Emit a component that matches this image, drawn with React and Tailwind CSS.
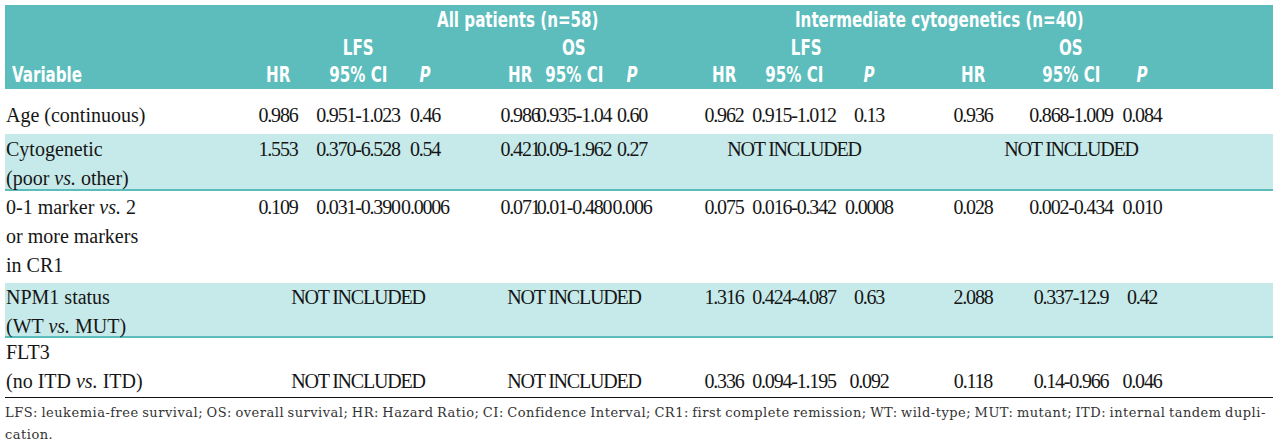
import React from "react";

const COLS = [
  "w-[66px]",
  "w-[94px]",
  "w-[40px]",
  "ml-[55px] w-[40px]",
  "w-[68px]",
  "w-[48px]",
  "ml-[44px] w-[48px]",
  "w-[92px]",
  "w-[58px]",
  "ml-[50px] w-[50px]",
  "ml-[22px] w-[102px]",
  "w-[40px]",
];

const NI = "NOT INCLUDED";
const NI4 = ["", NI, ""];

const ROWS = [
  {
    label: <>Age (continuous)</>,
    vals: ["0.986", "0.951-1.023", "0.46", "0.986", "0.935-1.04", "0.60", "0.962", "0.915-1.012", "0.13", "0.936", "0.868-1.009", "0.084"],
    cls: "h-[45px] pt-[12px]",
  },
  {
    label: (
      <>
        Cytogenetic
        <br />
        (poor <i>vs.</i> other)
      </>
    ),
    vals: ["1.553", "0.370-6.528", "0.54", "0.421", "0.09-1.962", "0.27", ...NI4, ...NI4],
    cls: "h-[57px] pt-[1px] bg-[#c6eaea] border-b-2 border-[#5cbcbc]",
  },
  {
    label: (
      <>
        0-1 marker <i>vs.</i> 2
        <br />
        or more markers
        <br />
        in CR1
      </>
    ),
    vals: ["0.109", "0.031-0.390", "0.0006", "0.071", "0.01-0.480", "0.006", "0.075", "0.016-0.342", "0.0008", "0.028", "0.002-0.434", "0.010"],
    cls: "h-[92px] pt-[2px]",
  },
  {
    label: (
      <>
        NPM1 status
        <br />
        (WT <i>vs.</i> MUT)
      </>
    ),
    vals: [...NI4, ...NI4, "1.316", "0.424-4.087", "0.63", "2.088", "0.337-12.9", "0.42"],
    cls: "h-[55px] bg-[#c6eaea] border-b-2 border-[#5cbcbc]",
  },
  {
    label: (
      <>
        FLT3
        <br />
        (no ITD <i>vs.</i> ITD)
      </>
    ),
    vals: [...NI4, ...NI4, "0.336", "0.094-1.195", "0.092", "0.118", "0.14-0.966", "0.046"],
    cls: "h-[60px] border-b border-[#111]",
    bottom: true,
  },
];

const headFont = {
  fontFamily: '"Liberation Sans Narrow", "DejaVu Sans Condensed", "Roboto Condensed", "Liberation Sans", sans-serif',
};

// condensed header text: the available fonts are too wide, squeeze them
function Sq({ children, left }) {
  return (
    <span className={`inline-block scale-x-[0.8] whitespace-nowrap ${left ? "origin-left" : "origin-center"}`}>
      {children}
    </span>
  );
}

function HeadRow({ cells, className }) {
  return (
    <div className={`flex h-[24px] leading-[24px] ${className}`}>
      <div className="w-[240px] pl-[7px]">{cells[0] && <Sq left>{cells[0]}</Sq>}</div>
      {COLS.map((c, i) => (
        <div key={i} className={`${c} flex justify-center whitespace-nowrap`}>
          {cells[i + 1] && <Sq>{cells[i + 1]}</Sq>}
        </div>
      ))}
    </div>
  );
}

export default function App() {
  return (
    <div className="w-[1280px] h-[446px] bg-white pt-[5px] px-[5px] text-[#161616]">
      <div className="w-[1268px]">
        {/* header */}
        <div className="bg-[#5cbdbc] text-white font-bold text-[21px] h-[84px] pt-[3px]" style={headFont}>
          <div className="flex h-[24px] leading-[24px]">
            <div className="w-[790px] pl-[432px]">
              <Sq left>All patients (n=58)</Sq>
            </div>
            <div>
              <Sq left>Intermediate cytogenetics (n=40)</Sq>
            </div>
          </div>
          <HeadRow
            className="mt-[4px]"
            cells={["", "", "LFS", "", "", "OS", "", "", <span className="pl-[30px]">LFS</span>, "", "", "OS", ""]}
          />
          <HeadRow
            className="mt-[3px]"
            cells={[
              "Variable",
              "HR", "95% CI", <i>P</i>,
              "HR", "95% CI", <i>P</i>,
              "HR", "95% CI", <i>P</i>,
              "HR", "95% CI", <i>P</i>,
            ]}
          />
        </div>

        {/* body */}
        <div className="font-['Liberation_Serif',serif] text-[20px] leading-[29px]">
          {ROWS.map((r, ri) => (
            <div key={ri} className={`flex ${r.bottom ? "items-end pb-[1px]" : "items-start"} ${r.cls}`}>
              <div className="w-[240px] pl-[1px] self-start">{r.label}</div>
              {COLS.map((c, i) => (
                <div key={i} className={`${c} flex justify-center whitespace-nowrap tracking-[-1.2px]`}>
                  {r.vals[i]}
                </div>
              ))}
            </div>
          ))}
        </div>

        {/* footnote */}
        <div className="font-['DejaVu_Serif',serif] text-[13px] leading-[22px] pt-[4px] text-[#333] w-[1261px] tracking-[0.5px]">
          <div className="whitespace-nowrap flex justify-between">
            {"LFS: leukemia-free survival; OS: overall survival; HR: Hazard Ratio; CI: Confidence Interval; CR1: first complete remission; WT: wild-type; MUT: mutant; ITD: internal tandem dupli-"
              .split(" ")
              .map((w, i) => (
                <span key={i}>{w}</span>
              ))}
          </div>
          <div>cation.</div>
        </div>
      </div>
    </div>
  );
}
